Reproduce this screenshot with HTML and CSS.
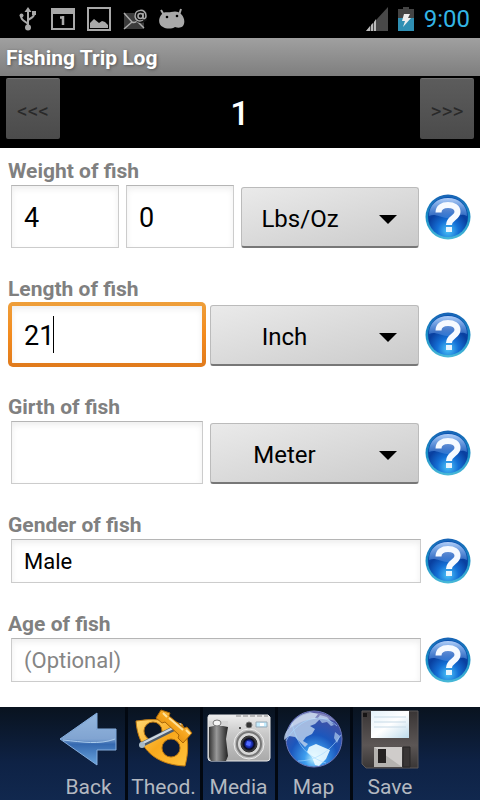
FILE: index.html
```html
<!DOCTYPE html>
<html lang="en">
<head>
<meta charset="utf-8">
<meta name="viewport" content="width=device-width, initial-scale=1">
<title>Fishing Trip Log</title>
<link rel="stylesheet" href="styles.css">
</head>
<body>
<svg class="defs" width="0" height="0" aria-hidden="true">
  <defs>
    <radialGradient id="ball" cx=".5" cy=".85" r=".75"><stop offset="0" stop-color="#4cc4f8"/><stop offset=".35" stop-color="#1470d6"/><stop offset=".7" stop-color="#093f9f"/><stop offset="1" stop-color="#0a4fb0"/></radialGradient>
    <linearGradient id="rim" x2="0" y2="1"><stop offset="0" stop-color="#1763b5"/><stop offset=".5" stop-color="#1a8fc6"/><stop offset="1" stop-color="#49b9d8"/></linearGradient>
    <linearGradient id="gloss" x2="0" y2="1"><stop offset="0" stop-color="#c3dcff" stop-opacity=".9"/><stop offset="1" stop-color="#5c97e8" stop-opacity=".4"/></linearGradient>
    <symbol id="help" viewBox="0 0 46 46">
      <circle cx="23" cy="23" r="22.500" fill="url(#rim)"/>
      <circle cx="23" cy="23" r="20" fill="url(#ball)"/>
      <path d="M4 22C4 11 12 4 23 4s19 7 19 18c-8-4-10 3-20 2-8-1-12-5-18-2z" fill="url(#gloss)"/>
      <path d="M13.500 18.500c0-5 4-7.500 9.500-7.500s9.500 2.500 9.500 7c0 6-8.500 6-8.500 13" fill="none" stroke="#f6faff" stroke-width="6"/>
      <path d="M21 33h6v5h-6z" fill="#e6f5ff"/>
    </symbol>
    <symbol id="caret-down" viewBox="0 0 18 9"><path d="M0 0h18L9 9z"/></symbol>
  </defs>
</svg>

<div class="app">
  <div class="status">
    <div class="status-icons">
      <svg width="18" height="24" viewBox="0 0 18 24" fill="none" stroke="#a9a9a9" stroke-width="2"><path d="M9 20V4M9 18C9 14 2 15 2 9M9 14c0-3 6-2 6-7"/><path d="M5.500 5L9 0l3.500 5z" fill="#a9a9a9" stroke="none"/><circle cx="9" cy="20.500" r="3" fill="#a9a9a9" stroke="none"/><circle cx="2.500" cy="8.500" r="2" fill="#a9a9a9" stroke="none"/><path d="M13 4h4v4h-4z" fill="#a9a9a9" stroke="none"/></svg>
      <svg width="24" height="24" viewBox="0 0 24 24"><path d="M1 2h22v20H1z" fill="none" stroke="#a9a9a9" stroke-width="2"/><path d="M0 1h24v6H0z" fill="#a9a9a9"/><path d="M12 9v9M9 10.500h3" fill="none" stroke="#a9a9a9" stroke-width="2.500"/></svg>
      <svg width="24" height="24" viewBox="0 0 24 24"><path d="M1 1h22v22H1z" fill="none" stroke="#a9a9a9" stroke-width="2"/><path d="M3 21v-5l4-4 5 4 3-2 3 1 3 3v3z" fill="#a9a9a9"/></svg>
      <svg width="24" height="24" viewBox="0 0 24 24"><path d="M1 6h20v16H1z" fill="#3b3b3b"/><path d="M1 6l8 9c2 1 3 1 5-1l7 7M1 22l8-7" fill="none" stroke="#aaa" stroke-width="1.500"/><circle cx="18" cy="9" r="7" fill="#111"/><circle cx="17.500" cy="9" r="2.500" fill="none" stroke="#aaa" stroke-width="1.500"/><path d="M20 6v5c1 2 3 0 3-2 0-8-11-7-11 0 0 5 5 6 8 4" fill="none" stroke="#aaa" stroke-width="1.500"/></svg>
      <svg width="26" height="24" viewBox="0 0 26 24"><path d="M2 3l3 5M22 2l-2 6" stroke="#a9a9a9" stroke-width="2"/><path d="M3 7c3-3 6-1 9-2 4-1 7-1 10 2 4 4 4 9 2 12-2 2-5 2-8 1-3 2-9 2-12 0-5-2-5-9-1-13z" fill="#a9a9a9"/><circle cx="8" cy="10" r="1.300"/><circle cx="18" cy="9" r="1.300"/></svg>
    </div>
    <div class="status-right">
      <svg width="22" height="24" viewBox="0 0 22 24"><path d="M22 0v24H0z" fill="#484848"/><path d="M0 24l4-5v5zM5 24v-6l2-2v8zM8 24v-9l2-3v12z" fill="#bbb"/></svg>
      <svg width="16" height="24" viewBox="0 0 16 24"><path d="M5 0h6v2h5v22H0V2h5z" fill="#444"/><path d="M0 11h16v13H0z" fill="#2f8fb3"/><path d="M6 7h6l-2 4h3l-8 9 2-6H4z" fill="#eee"/></svg>
      <span class="clock">9:00</span>
    </div>
  </div>
  <h1 class="title">Fishing Trip Log</h1>
  <div class="pager">
    <button class="pager-btn" type="button" disabled aria-label="Previous">&lt;&lt;&lt;</button>
    <span class="pager-num">1</span>
    <button class="pager-btn" type="button" disabled aria-label="Next">&gt;&gt;&gt;</button>
  </div>

  <form class="form">
    <div class="group">
      <label class="label" for="weight">Weight of fish</label>
      <div class="row">
        <div class="fields weight">
          <input class="input" id="weight" type="text" value="4">
          <input class="input" type="text" value="0" aria-label="Weight, ounces">
          <div class="select-wrap"><select class="select" aria-label="Weight unit"><option>Lbs/Oz</option></select><svg class="arrow"><use href="#caret-down"/></svg></div>
        </div>
        <button class="help" type="button" aria-label="Help on weight"><svg><use href="#help"/></svg></button>
      </div>
    </div>
    <div class="group">
      <label class="label" for="length">Length of fish</label>
      <div class="row">
        <div class="fields measure">
          <div class="edit"><input class="input active" id="length" type="text" value="21"><span class="cursor"></span></div>
          <div class="select-wrap"><select class="select" aria-label="Length unit"><option>Inch</option></select><svg class="arrow"><use href="#caret-down"/></svg></div>
        </div>
        <button class="help" type="button" aria-label="Help on length"><svg><use href="#help"/></svg></button>
      </div>
    </div>
    <div class="group">
      <label class="label" for="girth">Girth of fish</label>
      <div class="row">
        <div class="fields measure">
          <input class="input" id="girth" type="text">
          <div class="select-wrap"><select class="select" aria-label="Girth unit"><option>Meter</option></select><svg class="arrow"><use href="#caret-down"/></svg></div>
        </div>
        <button class="help" type="button" aria-label="Help on girth"><svg><use href="#help"/></svg></button>
      </div>
    </div>
    <div class="group">
      <label class="label" for="gender">Gender of fish</label>
      <div class="row">
        <input class="input small" id="gender" type="text" value="Male">
        <button class="help" type="button" aria-label="Help on gender"><svg><use href="#help"/></svg></button>
      </div>
    </div>
    <div class="group">
      <label class="label" for="age">Age of fish</label>
      <div class="row">
        <input class="input small" id="age" type="text" placeholder="(Optional)">
        <button class="help" type="button" aria-label="Help on age"><svg><use href="#help"/></svg></button>
      </div>
    </div>
  </form>

  <nav class="toolbar">
    <button class="tool" type="button">
      <svg class="tool-icon" viewBox="0 0 60 60"><defs><linearGradient id="arr" x2="0" y2="1"><stop offset="0" stop-color="#8eb4dd"/><stop offset=".5" stop-color="#7198cb"/><stop offset=".6" stop-color="#3569b0"/><stop offset="1" stop-color="#6aa5dd"/></linearGradient></defs><path d="M1 30L38 4v16h19v21H38v15z" fill="url(#arr)" stroke="#86aede"/><path d="M2 30L37 6v15h19v10c-16 5-34 0-54-1z" fill="#a5c0e2" opacity=".3"/><path d="M4 31c20 2 36 5 52-1" fill="none" stroke="#aacbec"/></svg>
      <span>Back</span>
    </button>
    <button class="tool" type="button">
      <svg class="tool-icon" viewBox="0 0 60 60"><defs><linearGradient id="gold" x2="1" y2="1"><stop offset="0" stop-color="#ffd873"/><stop offset=".5" stop-color="#f9a91d"/><stop offset="1" stop-color="#ffc23c"/></linearGradient><linearGradient id="tube" x1="1" y1="0" x2="0" y2="1"><stop offset="0" stop-color="#ffd671"/><stop offset=".5" stop-color="#f5a41c"/><stop offset="1" stop-color="#b96a06"/></linearGradient></defs><path d="M2 12q24-4 46 3c7 12 7 27 3 42C24 56 4 42 2 12z" fill="url(#gold)" stroke="#c47c10"/><circle cx="19" cy="22" r="9" fill="#0a1628" stroke="#a86a10"/><circle cx="37" cy="39" r="9" fill="#0c1b38" stroke="#a86a10"/><path d="M7 36L47 16" stroke="#4f5d6e" stroke-width="5"/><path d="M7 35L47 15" stroke="#cdd7e0" stroke-width="2.500"/><circle cx="8" cy="36" r="3" fill="#a9bac7"/><path d="M27 1l-5 8 6 5 3-1 14 13-1 3 5 5 9-10-5-6-3 1-15-12 1-3z" fill="url(#tube)" stroke="#a96708"/><path d="M29 4l4 4M35 9l14 12M52 21l4 4" stroke="#ffe29a" stroke-width="2"/></svg>
      <span>Theod.</span>
    </button>
    <button class="tool" type="button">
      <svg class="tool-icon wide" viewBox="0 0 66 60"><defs><linearGradient id="body" x2="0" y2="1"><stop offset="0" stop-color="#eee"/><stop offset=".4" stop-color="#c9c9c9"/><stop offset="1" stop-color="#a9a9a9"/></linearGradient><linearGradient id="grip"><stop offset="0" stop-color="#333"/><stop offset=".4" stop-color="#999"/><stop offset="1" stop-color="#222"/></linearGradient><radialGradient id="lens"><stop offset="0" stop-color="#4b64ff"/><stop offset=".45" stop-color="#1426a0"/><stop offset=".65" stop-color="#08091b"/><stop offset="1" stop-color="#555"/></radialGradient></defs><path d="M3 6h59l2 2v41q0 3-3 3H5q-3 0-3-3V8z" fill="url(#body)" stroke="#e9e9e9"/><path d="M30 7h32" stroke="#888" stroke-dasharray="5 2"/><path d="M3 18q9-3 19 0l-2 12 2 17-2 5H5l-2-4z" fill="url(#grip)"/><path d="M3 12h19v5H3z" fill="#d6d6d6"/><ellipse cx="11" cy="14" rx="4" ry="3" fill="#f5f5f5" stroke="#777"/><circle cx="43" cy="16" r="3" fill="#333" stroke="#777"/><path d="M50 13h11v5H50z" fill="#c5edff" stroke="#98aab7"/><path d="M54 14h4v3h-4z" fill="#fff"/><circle cx="43" cy="35" r="15" fill="#bbb" stroke="#eee"/><circle cx="43" cy="35" r="12" fill="#d8d8d8" stroke="#777" stroke-width="2"/><circle cx="43" cy="35" r="8" fill="url(#lens)" stroke="#333"/><path d="M41 32l4 1-1 4-4-1z" fill="#526aff"/><circle cx="34" cy="19" r="1" fill="#222"/></svg>
      <span>Media</span>
    </button>
    <button class="tool" type="button">
      <svg class="tool-icon" viewBox="0 0 60 60"><defs><radialGradient id="globe" cx=".5" cy=".85" r=".85"><stop offset="0" stop-color="#bff3ff"/><stop offset=".2" stop-color="#3d9dee"/><stop offset=".5" stop-color="#1b57bd"/><stop offset="1" stop-color="#514f9c"/></radialGradient></defs><circle cx="30" cy="30" r="28" fill="url(#globe)" stroke="#6974b7"/><path d="M5 19C9 10 16 5 26 3l8 2-3 4 5 1-5 5-5 2 5 3-3 5-6 3-3 4 5 3-3 3-10-10-6-1-5 4c0-4 1-8 5-12z" fill="#bfd5ed" opacity=".8"/><path d="M25 38l7-3 7 3 7 3-4 9-7 7-4-1-3-8-5-5z" fill="#edfcff" opacity=".9"/><path d="M36 6l7 2 7 8-3 1-4-4-5 1-4-5zM51 23l5 4-3 7-3-5z" fill="#bcd5f3" opacity=".65"/><path d="M2 32C12 13 35 0 53 17M8 14c5 23 16 34 34 40M57 26C45 44 30 52 14 52" fill="none" stroke="#a9dbff" opacity=".6"/><path d="M5 20C10 4 38-3 51 12 37 7 19 9 5 20z" fill="#fff" opacity=".3"/></svg>
      <span>Map</span>
    </button>
    <button class="tool" type="button">
      <svg class="tool-icon" viewBox="0 0 60 60"><defs><linearGradient id="disk" x2="0" y2="1"><stop offset="0" stop-color="#393535"/><stop offset=".6" stop-color="#5c5655"/><stop offset="1" stop-color="#393636"/></linearGradient><linearGradient id="paper" x2="1" y2="1"><stop offset="0" stop-color="#e4f1fa"/><stop offset=".5" stop-color="#fff"/><stop offset="1" stop-color="#bedbec"/></linearGradient></defs><path d="M2 2h56v57H6l-4-4z" fill="url(#disk)" stroke="#5c5858"/><path d="M11 2h38v27H11z" fill="url(#paper)"/><path d="M14 8h32M14 13h32M14 18h32" stroke="#c7dae7"/><path d="M3 4h4v4H3z" fill="#171515"/><path d="M14 38h28v20H14z" fill="#b4b2af"/><path d="M14 38h28v20z" fill="#cfccca"/><path d="M18 40h8v14h-8z" fill="#252222"/><path d="M43 38h7v20h-7z" fill="#393535" stroke="#292626"/></svg>
      <span>Save</span>
    </button>
  </nav>
</div>
</body>
</html>
```
FILE: styles.css
```css
* { box-sizing: border-box; }

body {
  margin: 0;
  background: #fff;
  color: #000;
  font-family: Roboto, "Liberation Sans", sans-serif;
}

button, input, select { font-family: inherit; }

.defs { position: absolute; }

.app {
  display: flex;
  flex-direction: column;
  min-height: 100vh;
}

.status {
  display: flex;
  justify-content: space-between;
  align-items: center;
  height: 38px;
  padding: 0 10px 0 19px;
  background: #000;
}

.status-icons { display: flex; gap: 12px; }

.status-icons svg:first-child { margin-right: 2px; }

.status-right { display: flex; align-items: center; gap: 10px; }

.clock {
  color: #33b5e5;
  font-size: 24px;
  line-height: 38px;
}

.title {
  margin: 0;
  padding: 2px 6px 0;
  background: linear-gradient(#a0a0a0, #7e7e7e);
  color: #fff;
  font-size: 21px;
  line-height: 36px;
  text-shadow: 1px 1px 3px #555;
}

.pager {
  display: flex;
  justify-content: space-between;
  align-items: flex-start;
  padding: 2px 6px 9px;
  background: #000;
}

.pager-btn {
  width: 54px;
  height: 61px;
  padding: 4px 0 0;
  border: 0;
  border-top: 1px solid #707070;
  border-radius: 2px;
  background: linear-gradient(#5c5c5c, #4b4b4b);
  color: #292929;
  font-size: 21px;
}

.pager-num {
  color: #fff;
  font-size: 34px;
  font-weight: 500;
  line-height: 70px;
  height: 61px;
}

.form {
  flex: 1;
  padding: 10px 9px 0 8px;
}

.group { margin-bottom: 28px; }

.group:last-child { margin-bottom: 0; }

.label {
  display: block;
  color: #808080;
  font-size: 21px;
  font-weight: 700;
  line-height: 26px;
}

.row {
  display: flex;
  align-items: center;
  gap: 4px;
  padding: 1px 0 0 3px;
}

.fields {
  display: grid;
  flex: 1;
  gap: 7px;
  margin-right: 2px;
}

.weight { grid-template-columns: 108fr 108fr 178fr; }

.measure { grid-template-columns: 192fr 209fr; }

.input {
  width: 100%;
  min-width: 0;
  height: 63px;
  padding: 3px 12px 0;
  border: 1px solid #ccc;
  border-top-color: #b5b5b5;
  border-radius: 0;
  outline: 0;
  background: #fff;
  box-shadow: inset 0 3px 6px #eee;
  color: #000;
  font-size: 27px;
}

.input::placeholder { color: #858585; opacity: 1; }

.small {
  flex: 1;
  height: 44px;
  padding-top: 0;
  font-size: 22px;
}

.edit {
  position: relative;
  margin: -1px -3px;
}

.active {
  height: 65px;
  border: 4px solid transparent;
  border-radius: 5px;
  background: linear-gradient(#fff, #fff) padding-box, linear-gradient(#ee9f3b, #f38b1e, #e07a1c) border-box;
}

.cursor {
  position: absolute;
  top: 14px;
  left: 45px;
  width: 1px;
  height: 37px;
  background: #000;
}

.select-wrap {
  position: relative;
  min-width: 0;
  padding-top: 2px;
}

.select {
  display: block;
  width: 100%;
  height: 61px;
  padding: 3px 60px 0 0;
  border: 1px solid #bbb;
  border-bottom: 2px solid #777;
  border-radius: 3px;
  appearance: none;
  background: linear-gradient(165deg, #eaeaea, #cbcbcb);
  color: #000;
  font-size: 24px;
  text-align: center;
  text-align-last: center;
}

.arrow {
  position: absolute;
  right: 22px;
  top: 30px;
  width: 18px;
  height: 9px;
  pointer-events: none;
}

.help {
  flex: none;
  width: 46px;
  height: 46px;
  margin: -1px 0;
  padding: 0;
  border: 0;
  background: none;
}

.help svg {
  display: block;
  width: 46px;
  height: 46px;
}

.toolbar {
  display: flex;
  justify-content: center;
  background: linear-gradient(#09131f, #0e2245 60%, #11284e);
}

.tool {
  display: flex;
  flex-direction: column;
  align-items: center;
  width: 75px;
  height: 93px;
  padding: 2px 0 0;
  border: 0;
  border-right: 3px solid #020811;
  background: none;
  color: #b3b8c0;
  font-size: 21px;
  line-height: 36px;
}

.tool:last-child { border-right: 0; }

.tool-icon {
  flex: none;
  width: 60px;
  height: 60px;
}

.wide { width: 66px; }
```
